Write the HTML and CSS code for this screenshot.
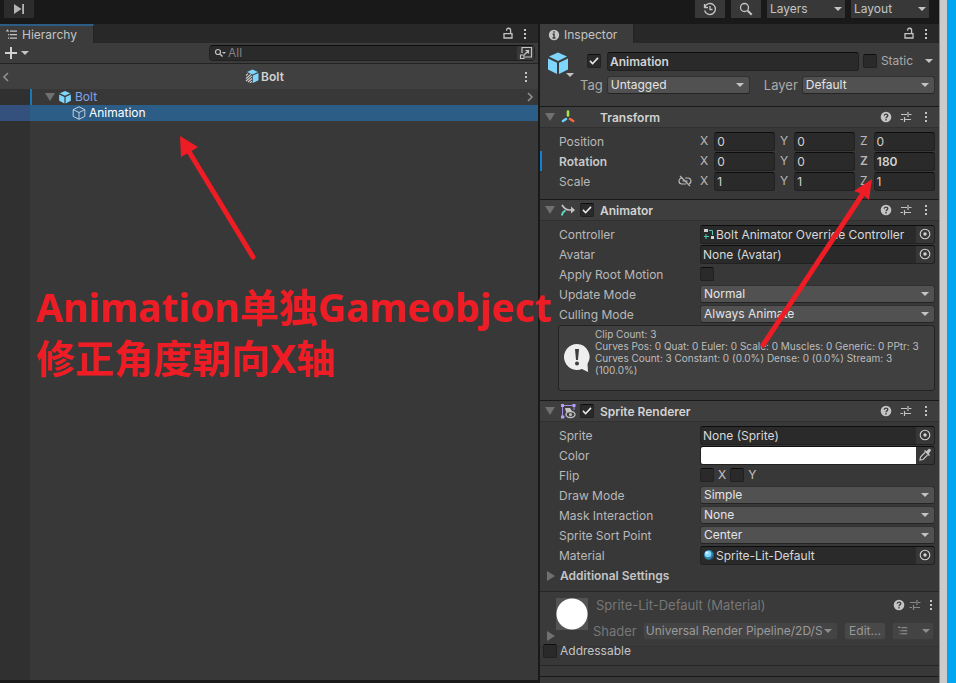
FILE: index.html
```html
<!DOCTYPE html>
<html lang="zh-CN">
<head>
<meta charset="utf-8">
<title>Bolt - Editor</title>
<link rel="stylesheet" href="styles.css">
</head>
<body>
<svg class="sprites" aria-hidden="true">
  <symbol id="i-dots" viewBox="0 0 14 14"><path fill="currentColor" d="M6 2h2v2H6zM6 6h2v2H6zM6 10h2v2H6z"/></symbol>
  <symbol id="i-lock" viewBox="0 0 14 14"><path fill="none" stroke="currentColor" stroke-width="1.3" d="M3 6.600h8v4.400H3zM9.600 6V3.500a2 2 0 0 0-4-.5v.8"/></symbol>
  <symbol id="i-list" viewBox="0 0 14 14"><path fill="currentColor" d="M2 1.500h1v1H2zM1 2.500h3v1H1zM5 2.500h7v1.200H5zM3 6h1.200v1.200H3zM5 6h7v1.200H5zM3 9.500h1.200v1.200H3zM5 9.500h7v1.200H5z"/></symbol>
  <symbol id="i-cube" viewBox="0 0 24 24"><path fill="#7fd6fd" d="M12 1.500 21 5.500 12 10 3 5.500zM2 7.500l9 4.300V23l-9-4.600zM22 7.500l-9 4.300V23l9-4.600z"/></symbol>
  <symbol id="i-cube-line" viewBox="0 0 14 14"><path fill="none" stroke="#c4d0da" d="M7 .8 12.800 3.600v6.800L7 13.300 1.200 10.400V3.600zM1.200 3.600 7 6.500l5.800-2.900M7 6.500v6.800"/></symbol>
  <symbol id="i-cube-variant" viewBox="0 0 14 14"><path fill="#7fd6fd" d="M7.500.5 13 3 7.500 5.500 2 3zM13.500 4v7.200L7.800 14V6.500z"/><path fill="none" stroke="#d0d0d0" stroke-width="1.100" d="M1 6.500 3 4.700M1 9.500l5-4.300M1 12l6-5.200M3 13l4-3.500M5 14l2-1.800"/></symbol>
  <symbol id="i-help" viewBox="0 0 14 14"><circle cx="7" cy="7" r="5.300" fill="currentColor"/><path fill="none" stroke="#3c3c3c" stroke-width="1.300" d="M5.200 5.800c0-2.300 3.600-2.300 3.600-.2 0 1.300-1.800 1.200-1.800 2.600M7 9.100v1.300"/></symbol>
  <symbol id="i-preset" viewBox="0 0 14 14"><path fill="none" stroke="currentColor" stroke-width="1.200" d="M2 4.500h6M10 4.500h2.500M9 2v5M1.500 9.500H4M6 9.500h6M5.500 7v5"/></symbol>
  <symbol id="i-target" viewBox="0 0 14 14"><circle cx="7" cy="7" r="4.800" fill="none" stroke="currentColor" stroke-width="1.100"/><circle cx="7" cy="7" r="1.700" fill="currentColor"/></symbol>
  <symbol id="i-search" viewBox="0 0 16 16"><circle cx="6.500" cy="6.500" r="4" fill="none" stroke="currentColor" stroke-width="1.300"/><path stroke="currentColor" stroke-width="2" d="m9.700 9.700 4 4"/></symbol>
</svg>

<div class="screen">
  <div class="editor">
    <header class="toolbar">
      <button class="tool tool-step" aria-label="Step"><svg width="14" height="14" viewBox="0 0 14 14"><path fill="#b4b4b4" d="M2 2l7.500 5L2 12zM10.200 2H12v10h-1.800z"/></svg></button>
      <span class="spacer"></span>
      <button class="tool" aria-label="History"><svg width="16" height="16" viewBox="0 0 16 16"><path fill="none" stroke="currentColor" stroke-width="1.300" d="M2.500 3v3.500H6M2.800 6a5.500 5.500 0 1 1-.2 3.500M8 5v3.500h2.500"/></svg></button>
      <button class="tool" aria-label="Search"><svg width="16" height="16"><use href="#i-search"/></svg></button>
      <span class="pick tool-pick"><select aria-label="Layers"><option>Layers</option></select></span>
      <span class="pick tool-pick"><select aria-label="Layout"><option>Layout</option></select></span>
    </header>

    <div class="panels">
      <section class="panel hierarchy">
        <div class="tabs">
          <a class="tab tab-focus" href="#hierarchy"><svg width="14" height="14"><use href="#i-list"/></svg>Hierarchy</a>
          <span class="spacer"></span>
          <button class="icon" aria-label="Lock"><svg width="14" height="14"><use href="#i-lock"/></svg></button>
          <button class="icon" aria-label="Menu"><svg width="14" height="14"><use href="#i-dots"/></svg></button>
        </div>
        <div class="searchbar">
          <button class="icon add" aria-label="Create"><svg width="26" height="14" viewBox="0 0 26 14"><path stroke="#d2d2d2" stroke-width="2" d="M0 7h12M6 1v12"/><path fill="#c4c4c4" d="M16 5h8l-4 4z"/></svg></button>
          <span class="search">
            <svg width="12" height="12" viewBox="0 0 12 12"><circle cx="4" cy="5" r="2.500" fill="none" stroke="#c4c4c4" stroke-width="1.200"/><path stroke="#c4c4c4" stroke-width="1.400" d="m6 7 2.500 2.500"/><path fill="#c4c4c4" d="M8 5h4l-2 2z"/></svg>
            <input type="text" placeholder="All" aria-label="Search hierarchy">
            <button class="icon" aria-label="Open search"><svg width="14" height="14" viewBox="0 0 14 14"><path fill="none" stroke="#c4c4c4" stroke-width="1.200" d="M3 7V1.500h9.500V11H6M1.500 9h3.500v3.500H1.500zM5.500 8.500l4-4M6.500 4.500h3v3"/></svg></button>
          </span>
        </div>
        <div class="crumb">
          <button class="icon" aria-label="Back"><svg width="8" height="12" viewBox="0 0 8 12"><path fill="none" stroke="#909090" stroke-width="1.600" d="M6 2 2 6l4 4"/></svg></button>
          <strong><svg width="14" height="14"><use href="#i-cube-variant"/></svg>Bolt</strong>
          <button class="icon" aria-label="Menu"><svg width="14" height="14"><use href="#i-dots"/></svg></button>
        </div>
        <ul class="tree">
          <li class="node node-root"><span class="fold"></span><svg width="14" height="14"><use href="#i-cube"/></svg><span>Bolt</span><svg class="enter" width="8" height="12" viewBox="0 0 8 12"><path fill="none" stroke="#909090" stroke-width="1.600" d="m2 2 4 4-4 4"/></svg></li>
          <li class="node node-child"><svg width="14" height="14"><use href="#i-cube-line"/></svg><span>Animation</span></li>
        </ul>
      </section>

      <section class="panel inspector">
        <div class="tabs">
          <a class="tab" href="#inspector"><svg width="14" height="14" viewBox="0 0 14 14"><circle cx="7" cy="7" r="5.200" fill="#c4c4c4"/><path fill="none" stroke="#3c3c3c" stroke-width="1.500" d="M7 3.200v1.500M5.600 6.300H7v3.600M5.500 10h3"/></svg>Inspector</a>
          <span class="spacer"></span>
          <button class="icon" aria-label="Lock"><svg width="14" height="14"><use href="#i-lock"/></svg></button>
          <button class="icon" aria-label="Menu"><svg width="14" height="14"><use href="#i-dots"/></svg></button>
        </div>

        <div class="object">
          <button class="icon object-icon" aria-label="Object icon"><svg width="30" height="30" viewBox="0 0 30 30"><use href="#i-cube" width="24" height="24"/><path fill="#c4c4c4" d="M20 22h8l-4 4z"/></svg></button>
          <div class="object-body">
            <div class="object-line">
              <input type="checkbox" checked aria-label="Active">
              <input class="field bold name" type="text" value="Animation" aria-label="Name">
              <input type="checkbox" id="static"><label for="static">Static</label><span class="caret"></span>
            </div>
            <div class="object-line object-tags">
              <label for="tag">Tag</label><span class="pick"><select id="tag"><option>Untagged</option></select></span>
              <label for="layer">Layer</label><span class="pick"><select id="layer"><option>Default</option></select></span>
            </div>
          </div>
        </div>

        <section class="component">
          <h2 class="head"><span class="fold"></span><svg width="16" height="16" viewBox="0 0 16 16"><g fill="none" stroke-width="2.600" stroke-linecap="round"><path stroke="#a5e44a" d="M8 2.500v4"/><path stroke="#6fd0fa" d="m6 10-3 2"/><path stroke="#f96a3f" d="m10 10 3.200 2"/></g></svg><span class="title title-bare">Transform</span>
            <button class="icon" aria-label="Help"><svg width="14" height="14"><use href="#i-help"/></svg></button><button class="icon" aria-label="Preset"><svg width="14" height="14"><use href="#i-preset"/></svg></button><button class="icon" aria-label="Menu"><svg width="14" height="14"><use href="#i-dots"/></svg></button></h2>
          <div class="rows">
            <div class="row"><span class="label">Position</span><div class="axes">
              <label>X<input class="field" type="text" value="0"></label><label>Y<input class="field" type="text" value="0"></label><label>Z<input class="field" type="text" value="0"></label></div></div>
            <div class="row changed"><span class="label bold">Rotation</span><div class="axes">
              <label>X<input class="field" type="text" value="0"></label><label>Y<input class="field" type="text" value="0"></label><label class="bold">Z<input class="field bold" type="text" value="180"></label></div></div>
            <div class="row"><span class="label">Scale<svg width="14" height="14" viewBox="0 0 14 14"><path fill="none" stroke="#b8b8b8" stroke-width="1.200" d="M5 4H4a3 3 0 0 0 0 6h4M7 4h3a3 3 0 0 1 1 5.800M4.500 7h5M2 2l10 10"/></svg></span><div class="axes">
              <label>X<input class="field" type="text" value="1"></label><label>Y<input class="field" type="text" value="1"></label><label>Z<input class="field" type="text" value="1"></label></div></div>
          </div>
        </section>

        <section class="component">
          <h2 class="head"><span class="fold"></span><svg width="16" height="16" viewBox="0 0 16 16"><path fill="none" stroke="#c4c4c4" stroke-width="1.700" d="M2 3c2 3 4 5 7 5h4"/><path fill="#c4c4c4" d="M11 4.500 15 8l-4 3.500z"/><path fill="none" stroke="#63e0c0" stroke-width="1.800" d="M2 13.500c0-3 1.500-4 3.500-5"/></svg><input type="checkbox" checked aria-label="Animator enabled"><span class="title">Animator</span>
            <button class="icon" aria-label="Help"><svg width="14" height="14"><use href="#i-help"/></svg></button><button class="icon" aria-label="Preset"><svg width="14" height="14"><use href="#i-preset"/></svg></button><button class="icon" aria-label="Menu"><svg width="14" height="14"><use href="#i-dots"/></svg></button></h2>
          <div class="rows">
            <div class="row"><label class="label" for="controller">Controller</label><span class="ref"><svg width="12" height="12" viewBox="0 0 12 12"><path fill="#d0d0d0" d="M1 1h4v3H1zM8 8h3v3H8z"/><path fill="none" stroke="#4fc9b0" d="M6 2.500h3.500V7M3 6v5M1 8.500h5"/></svg><input id="controller" type="text" value="Bolt Animator Override Controller"><button class="icon" aria-label="Pick controller"><svg width="14" height="14"><use href="#i-target"/></svg></button></span></div>
            <div class="row"><label class="label" for="avatar">Avatar</label><span class="ref"><input id="avatar" type="text" value="None (Avatar)"><button class="icon" aria-label="Pick avatar"><svg width="14" height="14"><use href="#i-target"/></svg></button></span></div>
            <div class="row"><label class="label" for="root">Apply Root Motion</label><input id="root" type="checkbox"></div>
            <div class="row"><label class="label" for="update">Update Mode</label><span class="pick"><select id="update"><option>Normal</option></select></span></div>
            <div class="row"><label class="label" for="culling">Culling Mode</label><span class="pick"><select id="culling"><option>Always Animate</option></select></span></div>
          </div>
          <div class="info">
            <svg width="28" height="30" viewBox="0 0 28 30"><path fill="#eee" d="M14 1a13 13 0 1 0 5 25l6 3-.5-8A13 13 0 0 0 14 1z"/><path fill="#3c3c3c" d="M12 6h4l-1 11h-2z"/><circle cx="14" cy="20.500" r="2" fill="#3c3c3c"/></svg>
            <p>Clip Count: 3<br>Curves Pos: 0 Quat: 0 Euler: 0 Scale: 0 Muscles: 0 Generic: 0 PPtr: 3<br>Curves Count: 3 Constant: 0 (0.0%) Dense: 0 (0.0%) Stream: 3<br>(100.0%)</p>
          </div>
        </section>

        <section class="component">
          <h2 class="head"><span class="fold"></span><svg width="16" height="16" viewBox="0 0 16 16"><path fill="none" stroke="#a58be0" d="M3 2.500h11M2.500 3v11M14 3v4M3 14h2"/><path fill="#b79cf5" d="M1 1h3v3H1zM12.500 1h3v3h-3zM1 12.500h3v3H1z"/><path fill="#c4c4c4" d="M5 5h5l2 3-6 1z"/><ellipse cx="10.500" cy="11.500" rx="4.500" ry="3" fill="none" stroke="#c4c4c4" stroke-width="1.300"/><circle cx="10.500" cy="11.500" r="1.500" fill="#c4c4c4"/></svg><input type="checkbox" checked aria-label="Sprite Renderer enabled"><span class="title">Sprite Renderer</span>
            <button class="icon" aria-label="Help"><svg width="14" height="14"><use href="#i-help"/></svg></button><button class="icon" aria-label="Preset"><svg width="14" height="14"><use href="#i-preset"/></svg></button><button class="icon" aria-label="Menu"><svg width="14" height="14"><use href="#i-dots"/></svg></button></h2>
          <div class="rows rows-last">
            <div class="row"><label class="label" for="sprite">Sprite</label><span class="ref"><input id="sprite" type="text" value="None (Sprite)"><button class="icon" aria-label="Pick sprite"><svg width="14" height="14"><use href="#i-target"/></svg></button></span></div>
            <div class="row"><span class="label">Color</span><span class="ref"><button class="swatch" aria-label="Color"></button><button class="icon" aria-label="Eyedropper"><svg width="14" height="14" viewBox="0 0 14 14"><path fill="none" stroke="#c4c4c4" stroke-width="1.200" d="M7 4.500 2.500 9 2 12l3-.5L9.500 7"/><path fill="#c4c4c4" d="m6 3 1-1 1.500 1.200L10.500 1q2-1 2.500 1.500L10.800 5.500 12 7l-1 1z"/></svg></button></span></div>
            <div class="row"><span class="label">Flip</span><span class="flips"><input id="fx" type="checkbox"><label for="fx">X</label><input id="fy" type="checkbox"><label for="fy">Y</label></span></div>
            <div class="row"><label class="label" for="draw">Draw Mode</label><span class="pick"><select id="draw"><option>Simple</option></select></span></div>
            <div class="row"><label class="label" for="mask">Mask Interaction</label><span class="pick"><select id="mask"><option>None</option></select></span></div>
            <div class="row"><label class="label" for="sort">Sprite Sort Point</label><span class="pick"><select id="sort"><option>Center</option></select></span></div>
            <div class="row"><label class="label" for="material">Material</label><span class="ref"><svg width="12" height="12" viewBox="0 0 12 12"><circle cx="6" cy="6" r="5" fill="#2f7fa8"/><path fill="#152a38" d="M8 1.500a5 5 0 0 1-3 9.300 5.500 5.500 0 0 0 5-7z"/><circle cx="5" cy="5" r="3.300" fill="#7fd6fd"/><circle cx="4" cy="4" r="1.300" fill="#d5f3ff"/></svg><input id="material" type="text" value="Sprite-Lit-Default"><button class="icon" aria-label="Pick material"><svg width="14" height="14"><use href="#i-target"/></svg></button></span></div>
            <div class="more bold"><span class="fold fold-closed"></span>Additional Settings</div>
          </div>
        </section>

        <section class="material">
          <span class="fold fold-closed"></span>
          <span class="preview"></span>
          <div class="material-body">
            <div class="material-line"><span class="material-name">Sprite-Lit-Default (Material)</span>
              <button class="icon" aria-label="Help"><svg width="14" height="14"><use href="#i-help"/></svg></button><button class="icon dim" aria-label="Preset"><svg width="14" height="14"><use href="#i-preset"/></svg></button><button class="icon" aria-label="Menu"><svg width="14" height="14"><use href="#i-dots"/></svg></button></div>
            <div class="material-line shader"><label for="shader">Shader</label><span class="pick"><select id="shader"><option>Universal Render Pipeline/2D/Sprite-Lit-Default</option></select></span>
              <button class="edit">Edit...</button><button class="edit variants" aria-label="Shader list"><svg width="14" height="12"><use href="#i-list"/></svg><span class="caret"></span></button></div>
          </div>
        </section>
        <div class="address"><input id="addr" type="checkbox"><label for="addr">Addressable</label></div>
        <div class="tail"></div>
      </section>
    </div>
  </div>
  <div class="edge"></div>
  <div class="desktop"></div>

  <p class="note">Animation单独Gameobject<br>修正角度朝向X轴</p>
  <svg class="arrows" width="956" height="683" viewBox="0 0 956 683" aria-hidden="true"><path fill="none" stroke="#ee1c24" stroke-width="5" stroke-linecap="round" d="M253 257 188 150M763 345 864 192"/><path fill="#ee1c24" d="M180 136 198 147 190 152 181 157zM872 179 854 191 862 194 869 200z"/></svg>
</div>
</body>
</html>
```
FILE: styles.css
```css
* { box-sizing: border-box; }

body {
  margin: 0;
  background: #191919;
  color: #c4c4c4;
  font: 12px/16px Inter, "Liberation Sans", sans-serif;
  overflow: hidden;
}

button, input, select { margin: 0; font: inherit; color: inherit; }
svg { display: block; flex: none; }
.sprites { position: absolute; width: 0; height: 0; }
.spacer { flex: 1; }
.bold { font-weight: 600; }

.screen { position: relative; display: flex; height: 100vh; }
.editor { flex: 1; min-width: 0; display: flex; flex-direction: column; }
.edge { width: 8px; background: #cbcbcb; border-left: 1px solid #858585; }
.desktop { width: 9px; background: #00a6f0; }

.icon {
  display: flex;
  align-items: center;
  justify-content: center;
  padding: 0;
  border: 0;
  background: none;
}

.caret, .pick::after {
  width: 0;
  height: 0;
  border: 4px solid transparent;
  border-top-color: #c4c4c4;
  border-bottom: 0;
}

/* Toolbar */
.toolbar { display: flex; gap: 6px; height: 24px; padding: 0 10px 6px 0; }
.tool {
  display: flex;
  align-items: center;
  justify-content: center;
  width: 30px;
  padding: 0;
  border: 0;
  background: #383838;
}
.tool-step { margin-left: 4px; background: #2c2c2c; }

/* Drop-downs */
.pick { position: relative; display: flex; flex: 1; min-width: 0; }
.pick::after { content: ""; position: absolute; right: 6px; top: 7px; }
.pick select {
  appearance: none;
  width: 100%;
  height: 18px;
  padding: 0 15px 0 3px;
  border: 1px solid #303030;
  border-bottom-color: #242424;
  border-radius: 3px;
  background: #515151;
  color: #e4e4e4;
  line-height: 16px;
  overflow: hidden;
}
.tool-pick { flex: none; width: 78px; }
.tool-pick::after { right: 3px; }
.tool-pick select { border: 0; border-radius: 0; background: #383838; color: #c4c4c4; }

/* Panels */
.panels { flex: 1; min-height: 0; display: flex; gap: 2px; }
.panel { display: flex; flex-direction: column; min-width: 0; background: #383838; }
.hierarchy { flex: 1; margin-bottom: 3px; }
.inspector { width: 399px; }

.tabs { display: flex; height: 19px; padding-right: 5px; background: #282828; }
.tab {
  display: flex;
  align-items: center;
  gap: 3px;
  padding: 2px 16px 0 5px;
  background: #3c3c3c;
  color: #c4c4c4;
  text-decoration: none;
  border-right: 1px solid #232323;
}
.inspector .tab { padding-left: 7px; }
.tab-focus { border-top: 2px solid #2c5d87; padding-top: 0; }
.tabs .icon { width: 17px; }

.searchbar {
  display: flex;
  align-items: center;
  justify-content: space-between;
  height: 21px;
  padding: 0 3px 0 5px;
  background: #3c3c3c;
  border-bottom: 1px solid #232323;
}
.search {
  display: flex;
  align-items: center;
  gap: 2px;
  width: 326px;
  height: 16px;
  padding-left: 4px;
  border: 1px solid #212121;
  border-top-color: #0d0d0d;
  border-radius: 4px;
  background: #2a2a2a;
}
.search input { flex: 1; min-width: 0; height: 14px; padding: 0; border: 0; background: none; }
.search input::placeholder { color: #818181; }
.search .icon { width: 17px; height: 14px; background: #383838; }

.crumb {
  display: flex;
  align-items: center;
  justify-content: space-between;
  height: 25px;
  padding: 0 5px 0 2px;
  background: #404040;
}
.crumb strong { display: flex; gap: 2px; font-weight: 600; color: #d2d2d2; }

.tree {
  flex: 1;
  margin: 0;
  padding: 0;
  list-style: none;
  background: linear-gradient(90deg, #303030 30px, #383838 30px);
}
.node { display: flex; align-items: center; gap: 3px; height: 16px; }
.node-root { padding: 0 4px 0 45px; color: #7ea4ea; background: linear-gradient(90deg, transparent 30px, #1a7ab8 30px, #1a7ab8 32px, transparent 32px); }
.node-root .enter { margin-left: auto; }
.node-child { padding-left: 72px; color: #fff; background: linear-gradient(90deg, #34507c 30px, #2c5d87 30px); }

.fold {
  flex: none;
  width: 0;
  height: 0;
  border: 5px solid transparent;
  border-top: 8px solid #707070;
  border-bottom: 0;
}
.fold-closed { border: 5px solid transparent; border-left: 8px solid #707070; border-right: 0; }

/* Fields */
.field, .ref {
  min-width: 0;
  height: 19px;
  border: 1px solid #212121;
  border-top-color: #0d0d0d;
  border-radius: 3px;
  background: #2a2a2a;
  color: #d2d2d2;
}
.field { padding: 1px 2px 0; }
.ref { display: flex; align-items: center; flex: 1; overflow: hidden; }
.ref input { flex: 1; min-width: 0; height: 17px; padding: 1px 0 0 2px; border: 0; background: none; color: #d8d8d8; }
.ref > svg { margin-left: 2px; }
.ref > svg + input { padding-left: 1px; }
.ref .icon { width: 18px; height: 17px; background: #373737; }
.swatch { flex: 1; height: 17px; padding: 0; border: 0; background: #fff; }

input[type="checkbox"] {
  appearance: none;
  flex: none;
  display: flex;
  justify-content: center;
  width: 14px;
  height: 14px;
  border: 1px solid #212121;
  border-top-color: #0d0d0d;
  border-radius: 2px;
  background: #2a2a2a;
}
input[type="checkbox"]:checked::after {
  content: "";
  width: 10px;
  height: 10px;
  margin-top: 1px;
  background: #e8e8e8;
  clip-path: polygon(4% 54%, 16% 42%, 36% 64%, 84% 12%, 96% 24%, 36% 88%);
}

/* Object header */
.object { display: flex; gap: 11px; height: 63px; padding: 8px 4px 0 6px; background: #3c3c3c; color: #aaa; }
.object-icon { height: 30px; }
.object-body { flex: 1; min-width: 0; }
.object-line { display: flex; align-items: center; gap: 4px; height: 20px; }
.object-line .caret { margin: 0 2px 0 8px; }
.name { flex: 1; margin-left: 2px; height: 19px; }
.object-tags { margin: 4px 0 0 -7px; font-size: 13px; }
.object-tags select { font-size: 12px; }
.object-tags label + .pick { flex: 144; }
.object-tags .pick + label { margin-left: 10px; }
.object-tags .pick:last-child { flex: 134; }

/* Components */
.component, .material { border-top: 1px solid #1a1a1a; }
.head {
  display: flex;
  align-items: center;
  height: 21px;
  margin: 0;
  padding: 0 6px 0 5px;
  background: #3e3e3e;
  border-bottom: 1px solid #303030;
  font: inherit;
}
.head .fold { margin-right: 5px; }
.head > input { margin-left: 4px; }
.title { flex: 1; margin-left: 6px; padding-top: 1px; font-weight: 600; color: #d2d2d2; }
.title-bare { margin-left: 24px; }
.head .icon { width: 20px; }
.head .icon:last-child { margin-right: -3px; }

.rows { padding: 3px 4px 8px 0; }
.rows-last { padding-bottom: 6px; }
.row { display: flex; align-items: center; height: 20px; padding-left: 19px; }
.label { display: flex; justify-content: space-between; flex: none; width: 141px; padding: 1px 8px 0 0; color: #b8b8b8; }
.label.bold { color: #c8c8c8; }
.changed { background: linear-gradient(90deg, #0f81d4 2px, transparent 2px); }
.axes { display: flex; flex: 1; gap: 5px; min-width: 0; }
.axes label { display: flex; align-items: center; flex: 1; min-width: 0; color: #b8b8b8; }
.axes .field { flex: 1; width: 0; margin-left: 6px; }
.flips { display: flex; align-items: center; gap: 4px; }
.more { display: flex; align-items: center; gap: 5px; height: 20px; padding: 1px 0 0 7px; }

.info {
  display: flex;
  align-items: center;
  gap: 4px;
  height: 66px;
  margin: -7px 4px 9px 18px;
  padding-left: 4px;
  border: 1px solid #232323;
  border-radius: 3px;
  background: #404040;
}
.info p { align-self: flex-start; margin: 2px 0 0; font-size: 10px; line-height: 12px; color: #bdbdbd; white-space: nowrap; }

/* Material */
.material { display: flex; height: 56px; padding: 5px 0 0 7px; border-color: #262626; border-bottom: 1px solid #333; background: #3a3a3a; color: #777; }
.material > .fold { align-self: flex-end; margin-bottom: 5px; }
.preview { width: 32px; height: 32px; margin: 1px 0 0 1px; background: radial-gradient(circle, #fff 15px, #535353 16px); }
.material-body { flex: 1; min-width: 0; margin-left: 5px; font-size: 13px; }
.material-line { display: flex; align-items: center; height: 16px; }
.material-name { flex: 1; margin-left: 3px; }
.material-line .icon { width: 16px; color: #c4c4c4; }
.material-line .icon.dim { color: #888; }
.shader { height: 20px; margin-top: 8px; padding-right: 5px; gap: 6px; font-size: 12px; }
.shader label { font-size: 13px; }
.shader select { padding-left: 2px; background: #444; border-color: #3c3c3c; color: #9a9a9a; }
.shader .pick::after, .shader .caret { border-top-color: #8c8c8c; }
.edit { display: flex; align-items: center; justify-content: center; width: 42px; height: 18px; padding: 0; border: 1px solid #3c3c3c; border-radius: 3px; background: #484848; color: #999; }
.variants { gap: 12px; background: #444; }

.address { display: flex; align-items: center; gap: 3px; height: 18px; padding: 0 3px 10px; }
.tail { height: 12px; border-top: 1px solid #262626; border-bottom: 1px solid #1a1a1a; }

/* Annotations lie over the whole editor */
.note {
  position: absolute;
  left: 36px;
  top: 281px;
  margin: 0;
  color: #ee1c24;
  font: 700 39px/51px "Noto Sans", "Noto Sans CJK SC", sans-serif;
  white-space: nowrap;
}
.arrows { position: absolute; left: 0; top: 0; pointer-events: none; }
```
